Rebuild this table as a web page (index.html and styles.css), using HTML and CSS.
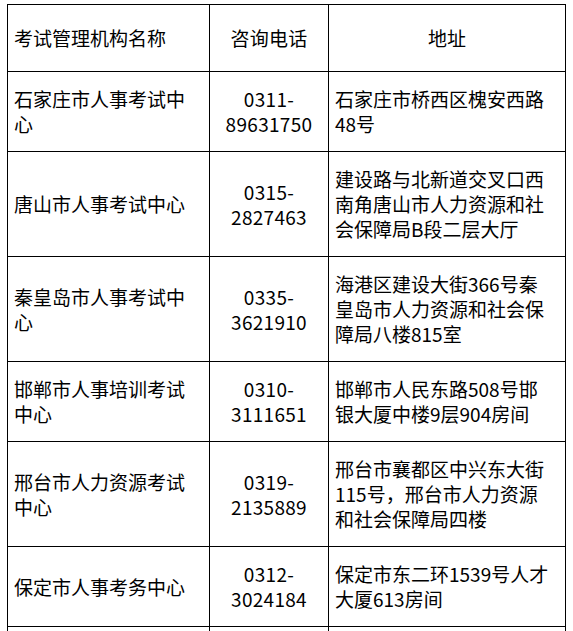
FILE: index.html
```html
<!DOCTYPE html>
<html lang="zh-CN">
<head>
<meta charset="utf-8">
<title>考试管理机构</title>
<link rel="stylesheet" href="styles.css">
</head>
<body>
<table class="org-table">
  <colgroup>
    <col class="c-name">
    <col class="c-phone">
    <col class="c-addr">
  </colgroup>
  <thead>
    <tr class="head-row">
      <th class="name">考试管理机构名称</th>
      <th class="phone">咨询电话</th>
      <th class="addr addr-head">地址</th>
    </tr>
  </thead>
  <tbody>
    <tr>
      <td class="name">石家庄市人事考试中心</td>
      <td class="phone">0311-<br>89631750</td>
      <td class="addr">石家庄市桥西区槐安西路48号</td>
    </tr>
    <tr>
      <td class="name">唐山市人事考试中心</td>
      <td class="phone">0315-<br>2827463</td>
      <td class="addr">建设路与北新道交叉口西南角唐山市人力资源和社会保障局B段二层大厅</td>
    </tr>
    <tr>
      <td class="name">秦皇岛市人事考试中心</td>
      <td class="phone">0335-<br>3621910</td>
      <td class="addr">海港区建设大街366号秦皇岛市人力资源和社会保障局八楼815室</td>
    </tr>
    <tr>
      <td class="name">邯郸市人事培训考试中心</td>
      <td class="phone">0310-<br>3111651</td>
      <td class="addr">邯郸市人民东路508号邯银大厦中楼9层904房间</td>
    </tr>
    <tr>
      <td class="name">邢台市人力资源考试中心</td>
      <td class="phone">0319-<br>2135889</td>
      <td class="addr">邢台市襄都区中兴东大街115号，邢台市人力资源和社会保障局四楼</td>
    </tr>
    <tr>
      <td class="name">保定市人事考务中心</td>
      <td class="phone">0312-<br>3024184</td>
      <td class="addr">保定市东二环1539号人才大厦613房间</td>
    </tr>
    <tr>
      <td class="name">&nbsp;<br>&nbsp;</td>
      <td class="phone">&nbsp;</td>
      <td class="addr">&nbsp;</td>
    </tr>
  </tbody>
</table>
</body>
</html>
```
FILE: styles.css
```css
html, body {
  margin: 0;
  padding: 0;
  background: #ffffff;
}

body {
  font-family: "Noto Sans CJK SC", "Noto Sans", sans-serif;
  font-size: 19px;
  line-height: 25px;
  color: #000000;
}

.org-table {
  margin: 4px 0 0 7px;
  width: 559px;
  table-layout: fixed;
  border-collapse: separate;
  border-spacing: 0;
  border-top: 1px solid #000;
  border-left: 1px solid #000;
}

.c-name { width: 202px; }
.c-phone { width: 119px; }
.c-addr { width: 237px; }

.org-table th,
.org-table td {
  border-right: 1px solid #000;
  border-bottom: 1px solid #000;
  vertical-align: middle;
  font-weight: normal;
  padding-top: 14px;
  padding-bottom: 15px;
  word-break: break-all;
}

.head-row th {
  padding-top: 20px;
  padding-bottom: 21px;
}

.name {
  text-align: left;
  padding-left: 6px;
  padding-right: 15px;
}

.phone {
  text-align: center;
  padding-left: 6px;
  padding-right: 6px;
  letter-spacing: 0.3px;
}

.addr {
  text-align: left;
  padding-left: 6px;
  padding-right: 12px;
}

.addr-head {
  text-align: center;
  padding-right: 6px;
}
```
